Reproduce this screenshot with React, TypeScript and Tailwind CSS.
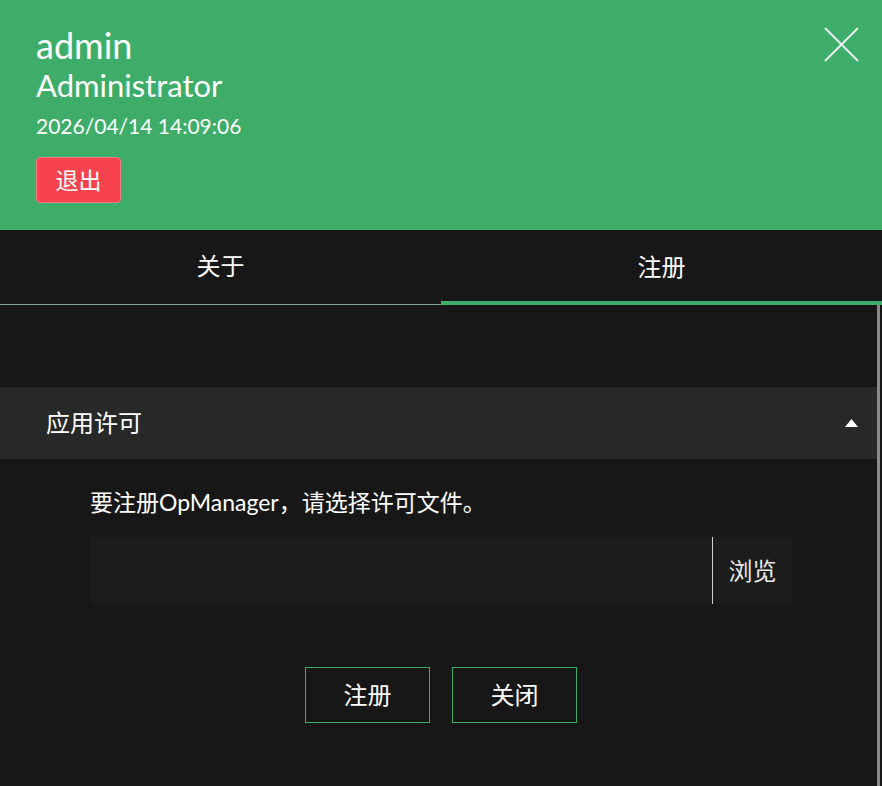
export default function App() {
  return (
    <div
      className="w-[882px] h-[786px] bg-[#171717] overflow-hidden flex flex-col text-white"
      style={{ fontFamily: 'Lato, "Noto Sans CJK SC", sans-serif' }}
    >
      {/* header */}
      <div className="relative h-[230px] bg-[#3dad69] pl-[36px] pt-[25px] shrink-0">
        <div className="text-[36px] leading-[40px]">admin</div>
        <div className="text-[31px] leading-[40px]">Administrator</div>
        <div className="text-[21px] leading-[28px] mt-[7px]">2026/04/14 14:09:06</div>
        <button className="mt-[17px] w-[85px] h-[46px] rounded-[4px] bg-[#f6434d] border border-[#f77a80] text-[23px] text-white flex items-center justify-center">
          退出
        </button>
        <svg className="absolute left-[824px] top-[27px]" width="35" height="35" viewBox="0 0 35 35">
          <path d="M1 1L34 34M34 1L1 34" stroke="#eaf5ee" strokeWidth="2" fill="none" />
        </svg>
      </div>

      {/* tabs */}
      <div className="flex h-[75px] shrink-0 text-[24px]">
        <div className="flex-1 flex items-center justify-center border-b border-[#86a893] pb-[2px]">关于</div>
        <div className="flex-1 flex items-center justify-center border-b-4 border-[#3dad69] pt-[2px]">注册</div>
      </div>

      {/* body */}
      <div className="flex flex-1 min-h-0">
        <div className="flex-1 pt-[82px]">
          <div className="h-[72px] bg-[#272929] flex items-center justify-between pl-[46px] pr-[19px]">
            <span className="text-[24px]">应用许可</span>
            <svg width="13" height="8" viewBox="0 0 13 8">
              <path d="M6.5 0L13 8H0Z" fill="#ffffff" />
            </svg>
          </div>
          <div className="pl-[90px] pr-[85px] pt-[29px]">
            <div className="text-[23px] leading-[28px]">要注册OpManager，请选择许可文件。</div>
            <div className="mt-[21px] h-[67px] bg-[#1c1c1c] flex">
              <div className="flex-1 border-r border-[#d0d0d0]" />
              <div className="w-[79px] flex items-center justify-center text-[24px] text-[#e8e8e8]">浏览</div>
            </div>
          </div>
          <div className="flex justify-center gap-[22px] mt-[63px] pl-[5px]">
            <button className="w-[125px] h-[56px] border border-[#3dad69] text-[24px] text-white">注册</button>
            <button className="w-[125px] h-[56px] border border-[#3dad69] text-[24px] text-white">关闭</button>
          </div>
        </div>
        <div className="w-[3px] bg-[#8a8a8a] mr-[2px]" />
      </div>
    </div>
  );
}
